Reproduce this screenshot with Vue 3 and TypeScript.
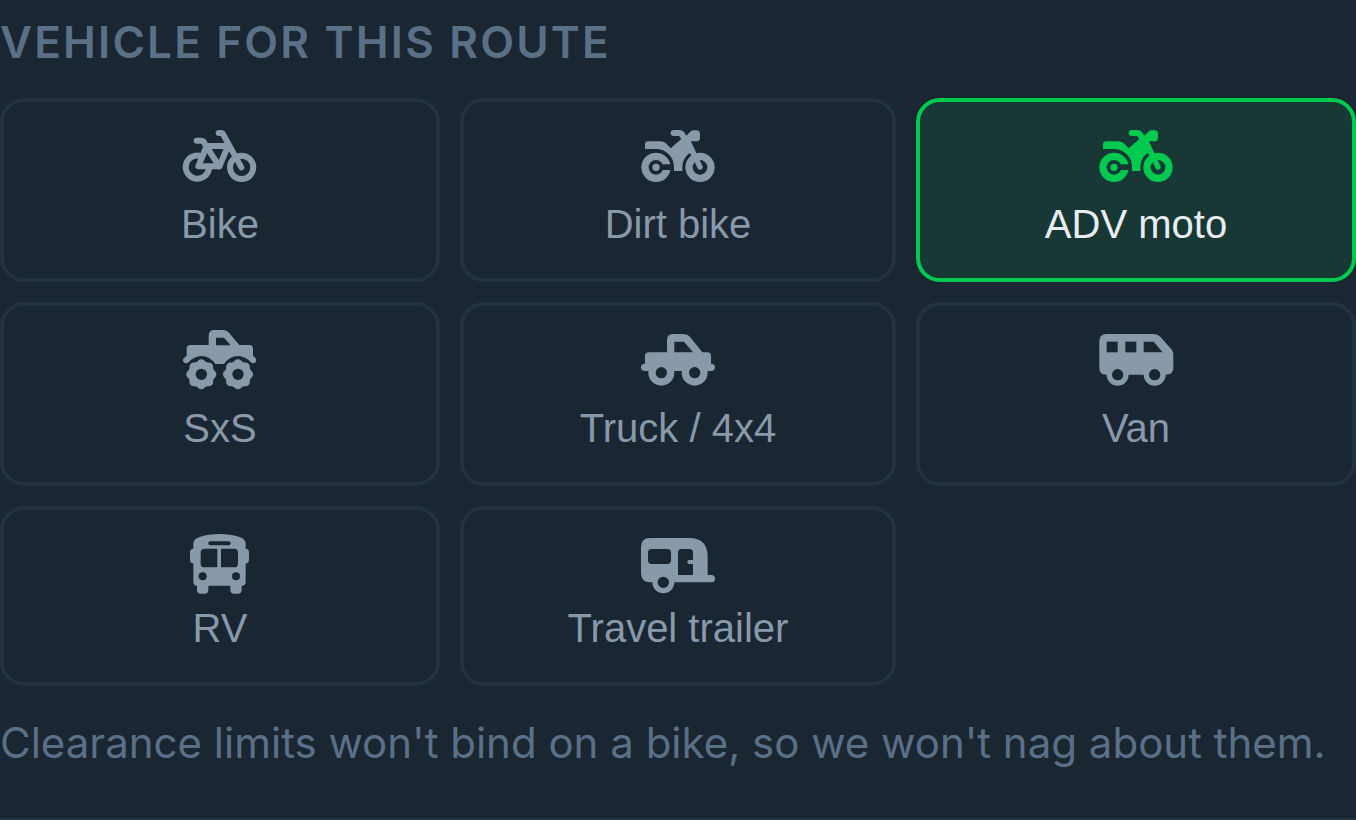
<script setup lang="ts">
import { ref } from 'vue'

interface Icon {
  x: number
  y: number
  fills: string[]
  cuts?: string[]
  lines?: string[]
  hubs?: string[]
  overlay?: string[]
}

interface Vehicle {
  id: string
  label: string
  icon: Icon
  tight?: boolean
}

const disc = (cx: number, cy: number, r: number): string =>
  `M${cx - r},${cy}a${r},${r} 0 1 0 ${2 * r},0a${r},${r} 0 1 0 ${-2 * r},0z`

const box = (x: number, y: number, w: number, h: number, r: number): string =>
  `M${x + r},${y}h${w - 2 * r}q${r},0 ${r},${r}v${h - 2 * r}q0,${r} ${-r},${r}h${-(w - 2 * r)}q${-r},0 ${-r},${-r}v${-(h - 2 * r)}q0,${-r} ${r},${-r}z`

// Off-road tyre: a disc with eight rounded lugs
const tyre = (cx: number, cy: number): string[] => [
  disc(cx, cy, 40),
  ...Array.from({ length: 8 }, (_, i) => {
    const a = (i * Math.PI) / 4
    return disc(cx + 32 * Math.cos(a), cy + 32 * Math.sin(a), 13)
  }),
]

const bicycle: Icon = {
  x: 38,
  y: 32,
  fills: [],
  lines: [
    'M116,159A35,35 0 1 1 92,122',
    disc(214, 156, 35),
    'M79,76H92Q98,76 101,81L107,92L147,153',
    'M107,92H171',
    'M109,92L84,153H147L173,92',
    'M145,53H152Q157,53 159,58L213,156',
  ],
}

const motorcycle: Icon = {
  x: 33,
  y: 32,
  fills: [
    disc(78, 156, 44),
    disc(210, 156, 44),
    'M45,101V88Q45,78 55,78H92Q103,78 110,86L122,99L155,70L168,62L181,49Q185,45 191,45H199Q210,45 210,56V67Q210,78 199,78H178L198,116L184,120L179,113Q157,129 157,156V167H132V156Q132,132 116,117Q101,101 78,101Z',
  ],
  cuts: [disc(78, 156, 22), disc(210, 156, 22), 'M88,147H126V164H88Z'],
  lines: ['M131,53H147Q153,53 157,59L163,70'],
  hubs: [disc(78, 156, 11)],
  overlay: ['M170,70L210,155'],
}

const monsterTruck: Icon = {
  x: 38,
  y: 30,
  fills: [
    'M49,107V86Q49,75 60,75H115V47Q115,30 132,30H158Q169,30 176,38L207,75H237Q248,75 248,86V107L255,114Q260,120 256,126Q250,133 243,128Q224,108 203,108Q178,108 161,132H135Q118,108 93,108Q72,108 53,128Q46,133 40,126Q35,120 41,114Z',
    ...tyre(93, 163),
    ...tyre(203, 163),
  ],
  cuts: ['M137,53H161L181,76H137Z', disc(93, 163, 17), disc(203, 163, 17)],
}

const pickup: Icon = {
  x: 33,
  y: 30,
  fills: [
    'M45,131V108Q45,97 56,97H111V61Q111,42 130,42H158Q172,42 181,52L217,97H232Q243,97 243,108V131Q255,131 255,142Q255,153 243,153H45Q33,153 33,142Q33,131 45,131Z',
    disc(94, 158, 39),
    disc(194, 158, 39),
  ],
  cuts: ['M133,65H162L189,97H133Z', disc(94, 158, 17), disc(194, 158, 17)],
}

const van: Icon = {
  x: 43,
  y: 30,
  fills: [
    'M44,64Q44,42 66,42H207Q219,42 227,50L260,88Q266,95 266,104V142Q266,164 246,164H64Q44,164 44,144Z',
    disc(99, 164, 33),
    disc(210, 164, 33),
  ],
  cuts: [
    'M66,65H99V97H66Z',
    'M122,65H155V97H122Z',
    'M177,65H207L234,97H177Z',
    disc(99, 164, 17),
    disc(210, 164, 17),
  ],
}

const bus: Icon = {
  x: 39,
  y: 28,
  fills: [
    'M70,72V57Q70,42 91,36Q116,28 148,28Q181,28 206,36Q227,42 227,57V72Q237,72 237,83V105Q237,116 227,116V172Q227,183 216,183H81Q70,183 70,172V116Q60,116 60,105V83Q60,72 70,72Z',
    box(81, 172, 34, 35, 11),
    box(181, 172, 34, 35, 11),
  ],
  cuts: [
    box(115, 50, 67, 12, 6),
    'M142,72H103Q92,72 92,83V117Q92,128 103,128H142Z',
    'M153,72H193Q204,72 204,83V117Q204,128 193,128H153Z',
    disc(98, 155, 12),
    disc(198, 155, 12),
  ],
}

const trailer: Icon = {
  x: 33,
  y: 27,
  fills: [
    'M33,67Q33,39 61,39H177Q233,39 233,95V150H244Q255,150 255,161Q255,172 244,172H61Q33,172 33,144Z',
    disc(100, 172, 33),
  ],
  cuts: [
    box(54, 72, 69, 45, 11),
    'M144,150V83Q144,72 155,72H178Q189,72 189,83V105H178Q172,105 172,111Q172,117 178,117H189V150Z',
    disc(100, 172, 17),
  ],
}

const vehicles: Vehicle[] = [
  { id: 'bike', label: 'Bike', icon: bicycle },
  { id: 'dirt', label: 'Dirt bike', icon: motorcycle },
  { id: 'adv', label: 'ADV moto', icon: motorcycle },
  { id: 'sxs', label: 'SxS', icon: monsterTruck },
  { id: 'truck', label: 'Truck / 4x4', icon: pickup },
  { id: 'van', label: 'Van', icon: van },
  { id: 'rv', label: 'RV', icon: bus, tight: true },
  { id: 'trailer', label: 'Travel trailer', icon: trailer, tight: true },
]

const selected = ref('adv')
</script>

<template>
  <section class="panel" aria-labelledby="vehicle-heading">
    <h2 id="vehicle-heading" class="heading">VEHICLE FOR THIS ROUTE</h2>
    <div class="grid" role="group" aria-labelledby="vehicle-heading">
      <button
        v-for="v in vehicles"
        :key="v.id"
        type="button"
        class="card"
        :class="{ selected: selected === v.id, tight: v.tight }"
        :aria-pressed="selected === v.id"
        @click="selected = v.id"
      >
        <svg class="icon" :viewBox="`${v.icon.x} ${v.icon.y} 222 180`" aria-hidden="true">
          <mask
            :id="`cut-${v.id}`"
            maskUnits="userSpaceOnUse"
            :x="v.icon.x - 4"
            :y="v.icon.y"
            width="230"
            height="182"
          >
            <rect :x="v.icon.x - 4" :y="v.icon.y" width="230" height="182" fill="#fff" />
            <path v-for="(d, i) in v.icon.cuts" :key="i" :d="d" fill="#000" />
          </mask>
          <g :mask="`url(#cut-${v.id})`">
            <path v-for="(d, i) in v.icon.fills" :key="i" :d="d" class="solid" />
            <path v-for="(d, i) in v.icon.lines" :key="i" :d="d" class="line" />
          </g>
          <path v-for="(d, i) in v.icon.hubs" :key="i" :d="d" class="solid" />
          <path v-for="(d, i) in v.icon.overlay" :key="i" :d="d" class="line fork" />
        </svg>
        <span class="label">{{ v.label }}</span>
      </button>
    </div>
    <p class="note">Clearance limits won't bind on a bike, so we won't nag about them.</p>
  </section>
</template>

<style>
body {
  margin: 0;
  background: #1a2632;
}
</style>

<style scoped>
.panel {
  box-sizing: border-box;
  min-height: 100vh;
  padding-top: 12px;
  border-bottom: 2px solid #233240;
  background: #1a2632;
  font-family: Inter, sans-serif;
  color: #5a7086;
}

.heading {
  margin: 0 0 26px;
  font-size: 44px;
  line-height: 60px;
  font-weight: 600;
  letter-spacing: 0.05em;
}

.grid {
  display: grid;
  grid-template-columns: 110fr 109fr 110fr;
  gap: 20px;
}

.card {
  display: flex;
  flex-direction: column;
  align-items: center;
  gap: 8px;
  min-width: 0;
  margin: 0;
  padding: 24px 8px;
  border: 4px solid #233240;
  border-radius: 24px;
  background: transparent;
  color: #8899aa;
  font-family: "Liberation Sans", Arial, sans-serif;
  font-size: 40px;
  line-height: 60px;
  cursor: pointer;
}

.card.tight {
  gap: 4px;
}

.card.selected {
  border-color: #00c950;
  background: #183835;
  color: #e8edf2;
}

.icon {
  display: block;
  width: 74px;
  height: 60px;
  overflow: visible;
}

.card.selected .icon {
  color: #00c950;
}

.solid {
  fill: currentColor;
}

.line {
  fill: none;
  stroke: currentColor;
  stroke-width: 18;
  stroke-linecap: round;
  stroke-linejoin: round;
}

.line.fork {
  stroke-width: 16;
}

.note {
  margin: 27px 0 0;
  font-size: 42px;
  line-height: 60px;
}
</style>
